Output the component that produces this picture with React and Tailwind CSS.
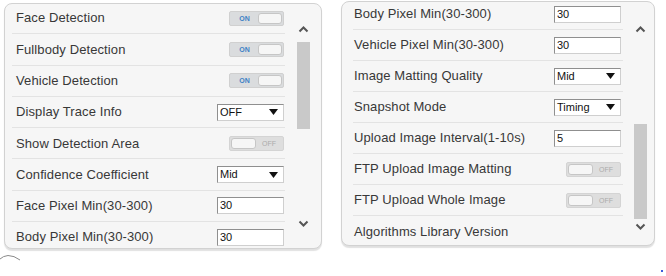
import React from 'react';

const leftRows = [
  { label: 'Face Detection', type: 'toggle', on: true },
  { label: 'Fullbody Detection', type: 'toggle', on: true },
  { label: 'Vehicle Detection', type: 'toggle', on: true },
  { label: 'Display Trace Info', type: 'select', value: 'OFF' },
  { label: 'Show Detection Area', type: 'toggle', on: false },
  { label: 'Confidence Coefficient', type: 'select', value: 'Mid' },
  { label: 'Face Pixel Min(30-300)', type: 'input', value: '30' },
  { label: 'Body Pixel Min(30-300)', type: 'input', value: '30' },
];

const rightRows = [
  { label: 'Body Pixel Min(30-300)', type: 'input', value: '30' },
  { label: 'Vehicle Pixel Min(30-300)', type: 'input', value: '30' },
  { label: 'Image Matting Quality', type: 'select', value: 'Mid' },
  { label: 'Snapshot Mode', type: 'select', value: 'Timing' },
  { label: 'Upload Image Interval(1-10s)', type: 'input', value: '5' },
  { label: 'FTP Upload Image Matting', type: 'toggle', on: false },
  { label: 'FTP Upload Whole Image', type: 'toggle', on: false },
  { label: 'Algorithms Library Version', type: 'none' },
];

const Toggle = ({ on }) =>
  on ? (
    <div className="flex h-[15px] w-[55px] items-center rounded-[2px] border border-[#d0d0d0] bg-[#dadcde] p-[1px]">
      <span className="flex w-[27px] justify-center text-[7px] font-bold leading-none text-[#3f82c6]">ON</span>
      <span className="h-full flex-1 rounded-[3px] border border-[#c6c6c6] bg-[#f6f6f6]" />
    </div>
  ) : (
    <div className="flex h-[15px] w-[55px] items-center rounded-[2px] border border-[#d4d4d4] bg-[#dedede] p-[1px]">
      <span className="h-full w-[25px] rounded-[3px] border border-[#c6c6c6] bg-[#f6f6f6]" />
      <span className="flex flex-1 justify-center text-[7px] leading-none text-[#ababab]">OFF</span>
    </div>
  );

const Select = ({ value }) => (
  <div className="flex h-[17px] w-[67px] items-center justify-between border border-[#8f8f8f] border-r-[#cfcfcf] border-b-[#cfcfcf] bg-white pl-[2px] pr-[5px] text-[11px] leading-none text-[#111]">
    <span>{value}</span>
    <svg width="9" height="6" viewBox="0 0 9 6">
      <polygon points="0,0 9,0 4.5,6" fill="#111" />
    </svg>
  </div>
);

const Input = ({ value }) => (
  <div className="flex h-[17px] w-[67px] items-center border border-[#8f8f8f] border-r-[#cfcfcf] border-b-[#cfcfcf] bg-white pl-[2px] text-[11px] leading-none text-[#111]">
    {value}
  </div>
);

const Row = ({ row, className }) => (
  <div className={`flex shrink-0 items-center justify-between border-b border-[#e3e3e3] ${className}`}>
    <span className="text-[13px] tracking-[0.1px] text-[#383838]">{row.label}</span>
    {row.type === 'toggle' && <Toggle on={row.on} />}
    {row.type === 'select' && <Select value={row.value} />}
    {row.type === 'input' && <Input value={row.value} />}
  </div>
);

const Chevron = ({ up }) => (
  <svg width="11" height="7" viewBox="0 0 11 7">
    <polyline
      points={up ? '1.5,5.5 5.5,1.5 9.5,5.5' : '1.5,1.5 5.5,5.5 9.5,1.5'}
      fill="none"
      stroke="#555"
      strokeWidth="2"
    />
  </svg>
);

const ScrollColumn = ({ top, thumbTop, thumbHeight, gap, width }) => (
  <div className={`flex shrink-0 flex-col items-center ${width}`}>
    <div style={{ marginTop: top }}>
      <Chevron up />
    </div>
    <div className="w-[13px] bg-[#c9c9c9]" style={{ marginTop: thumbTop, height: thumbHeight }} />
    <div style={{ marginTop: gap }}>
      <Chevron />
    </div>
  </div>
);

export default function App() {
  return (
    <div className="flex h-[276px] w-[666px] flex-col overflow-hidden bg-white" style={{ fontFamily: '"Liberation Sans", Arial, sans-serif' }}>
      <div className="flex items-start gap-[19px] pl-[4px] pt-[3px]">
        {/* left panel */}
        <div className="flex h-[246px] w-[318px] overflow-hidden rounded-[8px] border border-[#d2d2d2] bg-[#f6f6f6] shadow-[0_2px_1px_rgba(0,0,0,0.12)]">
          <div className="-mt-[1px] flex w-[283px] flex-col">
            {leftRows.map(r => (
              <Row key={r.label} row={r} className="ml-[7px] mr-[3px] h-[31.3px] pl-[4px] pr-[1px]" />
            ))}
          </div>
          <ScrollColumn width="w-[30px]" top={22} thumbTop={9} thumbHeight={87} gap={91} />
        </div>

        {/* right panel */}
        <div className="-mt-[2px] flex h-[245px] w-[314px] overflow-hidden rounded-[8px] border border-[#d2d2d2] bg-[#f6f6f6] shadow-[0_2px_1px_rgba(0,0,0,0.12)]">
          <div className="-mt-[3px] flex w-[284px] flex-col">
            {rightRows.map(r => (
              <Row key={r.label} row={r} className="ml-[11px] mr-[3px] h-[31px] pl-[1px] pr-[2px] last:border-b-0" />
            ))}
          </div>
          <ScrollColumn width="w-[28px]" top={24} thumbTop={91} thumbHeight={95} gap={4} />
        </div>
      </div>

      {/* bottom fragments */}
      <div className="mt-[5px] flex items-start justify-between">
        <svg width="22" height="10" viewBox="0 0 22 10">
          <path d="M0 5 Q3 2 8 1.5 Q14 1.5 20 6" fill="none" stroke="#8a8a8a" strokeWidth="1" />
        </svg>
        <div className="mr-[3px] mt-[16px] h-[2px] w-[2px] bg-[#3b5bdb]" />
      </div>
    </div>
  );
}
